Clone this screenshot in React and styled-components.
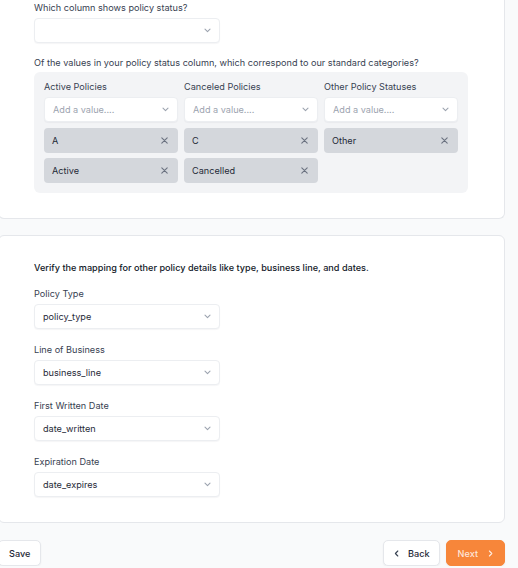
import React from "react";
import styled, { createGlobalStyle } from "styled-components";

const Global = createGlobalStyle`
  html, body { margin: 0; padding: 0; background: #f9fafb; }
  body { font-family: Inter, "Noto Sans", sans-serif; font-size: 9.15px; color: #374151; overflow: hidden; }
  * { box-sizing: border-box; }
`;

const Page = styled.div`
  width: 507px;
  margin-left: -2px;
  display: flex;
  flex-direction: column;
`;

const Card = styled.section`
  background: #fff;
  border: 1px solid #e5e7eb;
  border-radius: 6px;
  padding: ${(p) => p.$pad};
  margin-top: ${(p) => p.$mt || "0"};
  display: flex;
  flex-direction: column;
`;

const TopCard = styled(Card)`
  border-top: none;
  border-top-left-radius: 0;
  border-top-right-radius: 0;
`;

const Label = styled.div`
  line-height: 12px;
  height: 12px;
  color: ${(p) => (p.$strong ? "#111827" : "#374151")};
  font-weight: ${(p) => (p.$strong ? 500 : 400)};
  margin-top: ${(p) => p.$mt || "0"};
  white-space: nowrap;
`;

const SelectBox = styled.div`
  width: ${(p) => p.$w || "186px"};
  height: 25px;
  margin-top: ${(p) => p.$mt || "4px"};
  background: #fff;
  border: 1px solid #eceef1;
  border-radius: 4px;
  box-shadow: 0 1px 1px rgba(16, 24, 40, 0.04);
  display: flex;
  align-items: center;
  justify-content: space-between;
  padding: 0 8px;
  color: ${(p) => (p.$placeholder ? "#9ca3af" : "#1f2937")};
`;

const Chevron = ({ color = "#9ca3af", dir = "down" }) => {
  const d =
    dir === "down"
      ? "M1 1.2 L3.5 3.6 L6 1.2"
      : dir === "left"
      ? "M3.8 1 L1.4 3.5 L3.8 6"
      : "M1.4 1 L3.8 3.5 L1.4 6";
  const vb = dir === "down" ? "0 0 7 5" : "0 0 5 7";
  return (
    <svg width={dir === "down" ? 7 : 5} height={dir === "down" ? 5 : 7} viewBox={vb} fill="none">
      <path d={d} stroke={color} strokeWidth="1.1" strokeLinecap="round" strokeLinejoin="round" />
    </svg>
  );
};

const XIcon = () => (
  <svg width="7" height="7" viewBox="0 0 7 7" fill="none">
    <path d="M0.8 0.8 L6.2 6.2 M6.2 0.8 L0.8 6.2" stroke="#6b7280" strokeWidth="1.1" strokeLinecap="round" />
  </svg>
);

const Panel = styled.div`
  margin-top: 3px;
  width: 434px;
  background: #f3f4f6;
  border-radius: 6px;
  padding: 9px 10px 10px;
  display: grid;
  grid-template-columns: repeat(3, 134px);
  column-gap: 6px;
  align-items: start;
`;

const Column = styled.div`
  display: flex;
  flex-direction: column;
`;

const ChipList = styled.div`
  display: flex;
  flex-direction: column;
  gap: 5px;
  margin-top: 6px;
`;

const Chip = styled.div`
  height: 25px;
  background: #d4d7dc;
  border-radius: 4px;
  display: flex;
  align-items: center;
  justify-content: space-between;
  padding: 0 10px 0 8px;
  color: #1f2937;
`;

const Footer = styled.div`
  margin-top: 17px;
  display: flex;
  align-items: center;
  justify-content: space-between;
`;

const Group = styled.div`
  display: flex;
  gap: 6px;
`;

const Button = styled.button`
  height: 26px;
  font-family: inherit;
  font-size: 9.15px;
  font-weight: 500;
  border-radius: 5px;
  display: flex;
  align-items: center;
  gap: ${(p) => p.$gap || "9px"};
  padding: ${(p) => p.$pad || "0 10px"};
  cursor: pointer;
  background: ${(p) => (p.$primary ? "#f7863a" : "#fff")};
  color: ${(p) => (p.$primary ? "rgba(255,255,255,0.82)" : "#1f2937")};
  border: 1px solid ${(p) => (p.$primary ? "#f7863a" : "#e5e7eb")};
  box-shadow: 0 1px 2px rgba(16, 24, 40, 0.06);
`;

const columns = [
  { title: "Active Policies", chips: ["A", "Active"] },
  { title: "Canceled Policies", chips: ["C", "Cancelled"] },
  { title: "Other Policy Statuses", chips: ["Other"] },
];

const fields = [
  { label: "Policy Type", value: "policy_type" },
  { label: "Line of Business", value: "business_line" },
  { label: "First Written Date", value: "date_written" },
  { label: "Expiration Date", value: "date_expires" },
];

export default function App() {
  return (
    <>
      <Global />
      <Page>
        <TopCard $pad="2px 35px 25px">
          <Label>Which column shows policy status?</Label>
          <SelectBox>
            <span />
            <Chevron />
          </SelectBox>
          <Label $mt="14px">
            Of the values in your policy status column, which correspond to our standard categories?
          </Label>
          <Panel>
            {columns.map((c) => (
              <Column key={c.title}>
                <Label>{c.title}</Label>
                <SelectBox $w="134px" $placeholder>
                  <span>Add a value....</span>
                  <Chevron />
                </SelectBox>
                <ChipList>
                  {c.chips.map((v) => (
                    <Chip key={v}>
                      <span>{v}</span>
                      <XIcon />
                    </Chip>
                  ))}
                </ChipList>
              </Column>
            ))}
          </Panel>
        </TopCard>
        <Card $pad="26px 35px 25px" $mt="16px">
          <Label $strong>
            Verify the mapping for other policy details like type, business line, and dates.
          </Label>
          {fields.map((f, i) => (
            <React.Fragment key={f.label}>
              <Label $mt={i === 0 ? "14px" : "15px"}>{f.label}</Label>
              <SelectBox>
                <span>{f.value}</span>
                <Chevron />
              </SelectBox>
            </React.Fragment>
          ))}
        </Card>
        <Footer>
          <Button>Save</Button>
          <Group>
            <Button $pad="0 9px 0 10px" $gap="9px">
              <Chevron color="#374151" dir="left" />
              Back
            </Button>
            <Button $primary $pad="0 11px 0 11px" $gap="10px">
              Next
              <Chevron color="rgba(255,255,255,0.85)" dir="right" />
            </Button>
          </Group>
        </Footer>
      </Page>
    </>
  );
}
